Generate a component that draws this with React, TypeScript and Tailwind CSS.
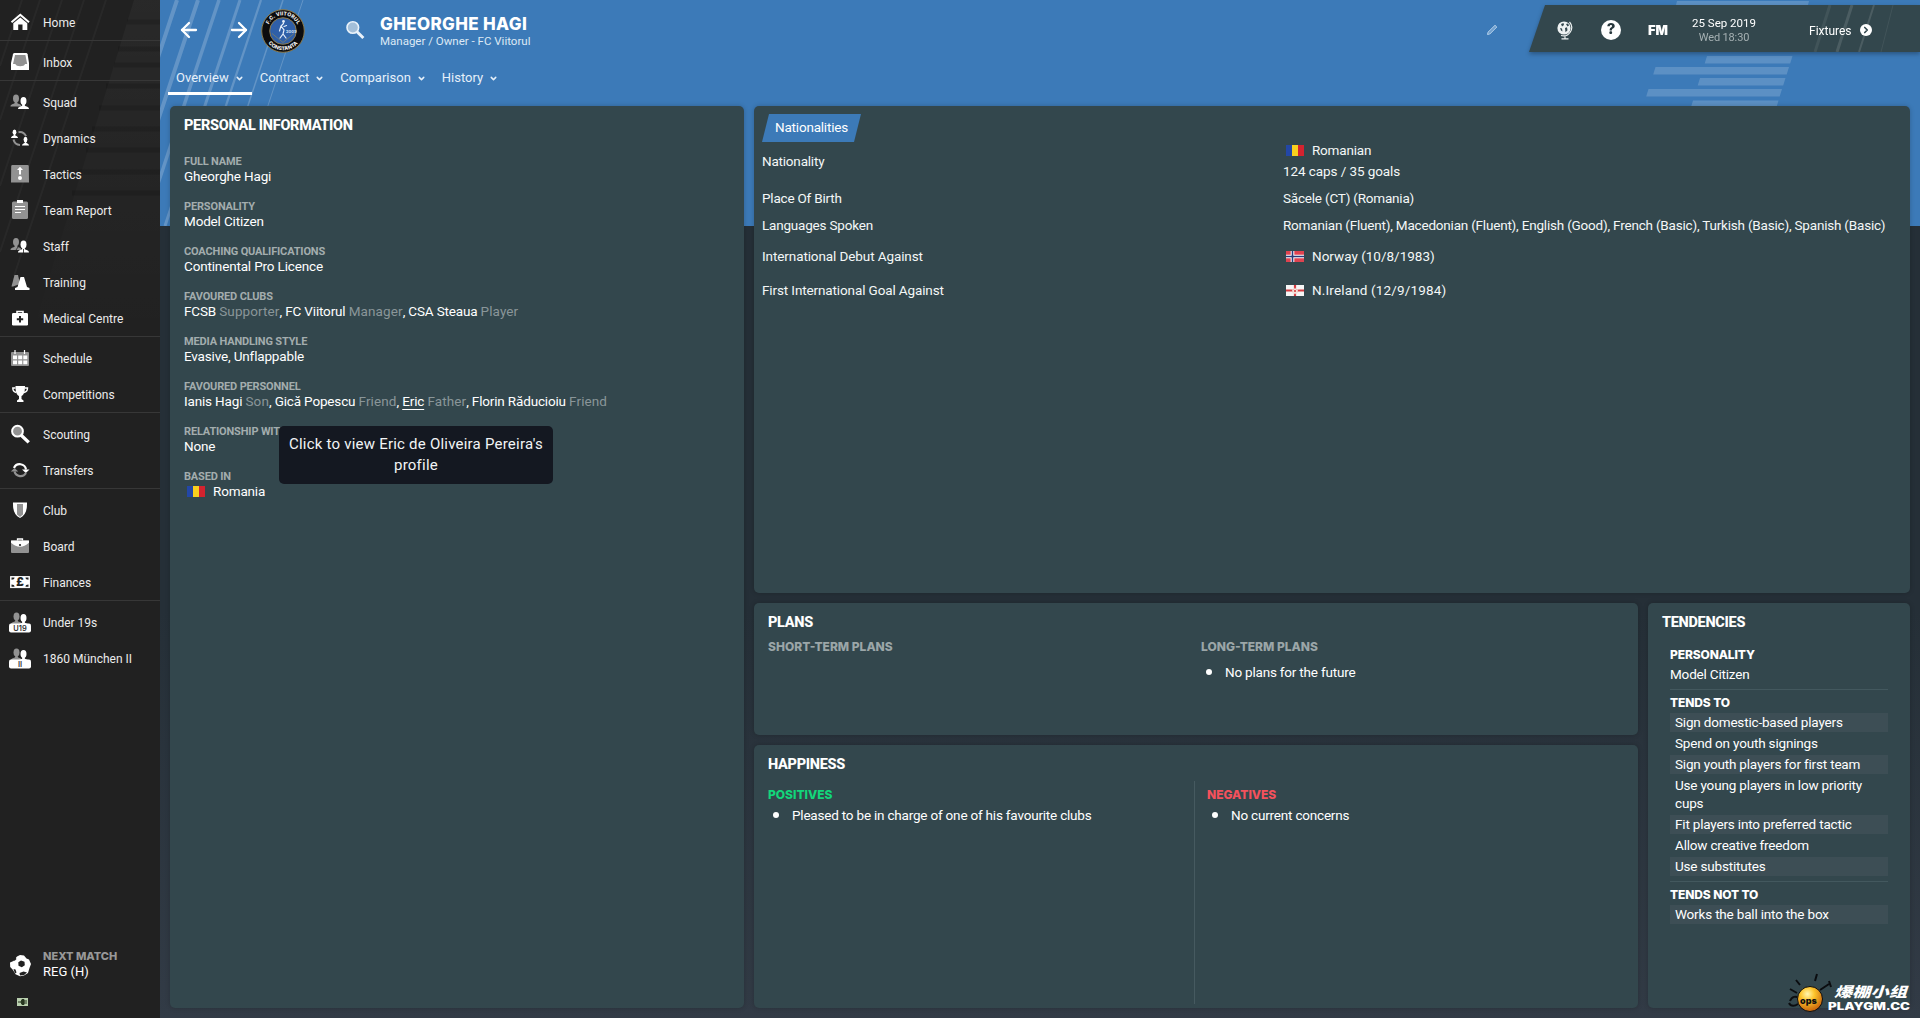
import type { ReactNode } from 'react'
import { ArrowLeft, ArrowRight, ChevronDown, ChevronRight } from 'lucide-react'

interface NavItem {
  label: string
  icon: ReactNode
}

const GREY = '#929292'

function Head({ x, y, fill }: { x: number; y: number; fill: string }) {
  return (
    <g fill={fill}>
      <ellipse cx={x} cy={y} rx="3" ry="3.9" />
      <path d={`M${x - 5.5} ${y + 8}c0-2.6 3-2.4 4.2-3.6v-2h2.6v2c1.2 1.2 4.2 1 4.2 3.6z`} />
    </g>
  )
}

function TeamIcon({ tag }: { tag: string }) {
  return (
    <>
      <Head x={6.5} y={4.5} fill={GREY} />
      <Head x={13.5} y={6} fill="#fff" />
      <rect x="-1" y="11.5" width="22" height="9" rx="2" fill="#fff" />
      <text x="10" y="19" textAnchor="middle" className="font-[Inter] text-[7.5px] font-semibold" fill="#333">{tag}</text>
    </>
  )
}

const navGroups: NavItem[][] = [
  [
    {
      label: 'Home',
      icon: (
        <>
          <path d="M1.5 10.2 10.3 2.7 19 10.2" fill="none" stroke="#fff" strokeWidth="2" />
          <path d="M3.3 11.2 10.3 5.5l7 5.7V18h-4.8v-5.500H8.200V18H3.300z" fill="#fff" />
        </>
      ),
    },
  ],
  [
    {
      label: 'Inbox',
      icon: (
        <>
          <path d="M4.5 1H16q1.300 0 1.600 1.300L19 11v7H1v-7l2-8.700Q3.300 1 4.500 1z" fill="#fff" />
          <path d="M5 3h10.400l1.800 9H15c-.5 3-9 3-9.600 0H3z" fill={GREY} />
        </>
      ),
    },
  ],
  [
    {
      label: 'Squad',
      icon: (
        <>
          <Head x={6} y={6.5} fill={GREY} />
          <Head x={13.5} y={9} fill="#fff" />
        </>
      ),
    },
    {
      label: 'Dynamics',
      icon: (
        <>
          <path d="M8.500 4.200a7 7 0 0 1 7.500 4M3.500 11.500a7 7 0 0 0 6.500 5.500" fill="none" stroke={GREY} strokeWidth="2" />
          <g fill="#fff">
            <ellipse cx="4.5" cy="4.3" rx="1.9" ry="2.7" />
            <path d="M1 10c0-2 2-2 2.800-2.800V6h1.400v1.200C6 8 8 8 8 10z" />
            <ellipse cx="15.5" cy="11.5" rx="1.9" ry="2.7" />
            <path d="M12 17.500c0-2 2-2 2.800-2.800v-1.200h1.400v1.200c.8.8 2.800.8 2.800 2.800z" />
          </g>
        </>
      ),
    },
    {
      label: 'Tactics',
      icon: (
        <>
          <path d="M2.500 1h15q1.300 0 1.300 1.200L19 18.500H1L1.200 2.200Q1.200 1 2.500 1z" fill={GREY} />
          <path d="M10 2.800 13 6h-2v4.500H9V6H7z" fill="#fff" />
          <circle cx="10" cy="14" r="2" fill="#fff" />
        </>
      ),
    },
    {
      label: 'Team Report',
      icon: (
        <>
          <rect x="2" y="1.5" width="16" height="17.5" rx="1.5" fill={GREY} />
          <rect x="7" y="0" width="6" height="3" fill="#fff" />
          <path d="M5 6.500h10M5 9.500h10M5 12.500h6" stroke="#fff" strokeWidth="1.2" />
        </>
      ),
    },
    {
      label: 'Staff',
      icon: (
        <>
          <Head x={6} y={6} fill={GREY} />
          <Head x={13.5} y={8.5} fill="#fff" />
          <path d="M13.500 13v4M8 11l-2 3" stroke="#222" strokeWidth=".8" />
        </>
      ),
    },
    {
      label: 'Training',
      icon: (
        <>
          <path d="M4.500 3h3.500l2 9-7 2.500H1.500z" fill={GREY} />
          <path d="M10.500 5h3.500l3 10 2.500 1v2H5v-2l2.500-1z" fill="#fff" />
        </>
      ),
    },
    {
      label: 'Medical Centre',
      icon: (
        <>
          <path d="M7 6V3.500h6V6" fill="none" stroke="#fff" strokeWidth="1.6" />
          <rect x="2" y="5" width="16" height="12.5" rx="1.2" fill="#fff" />
          <path d="M10 8v6.500M6.800 11.200h6.400" stroke="#222" strokeWidth="2" />
        </>
      ),
    },
  ],
  [
    {
      label: 'Schedule',
      icon: (
        <>
          <rect x="1" y="4" width="18" height="14" rx="1" fill={GREY} />
          <path d="M5 2v4M14.500 2v4" stroke="#fff" strokeWidth="1.2" />
          <path d="M3 7.500h4v3.800H3zM8.200 7.500h4v3.800h-4zM13.300 7.500h4v3.800h-4zM3 12.500h4v3.800H3zM8.200 12.500h4v3.800h-4zM13.300 12.500h4v3.800h-4z" fill="#fff" />
        </>
      ),
    },
    {
      label: 'Competitions',
      icon: (
        <>
          <path d="M5.500 2h9.500c0 6-1 8.500-3.500 10v3l2 1.500V18H7v-1.500L9 15v-3C6.500 10.500 5.500 8 5.500 2z" fill="#fff" />
          <path d="M5.500 4H2.800c0 2.500 1 4 3.500 4.500M15 4h2.500c0 2.500-1 4-3.500 4.500" fill="none" stroke="#fff" strokeWidth="1.4" />
        </>
      ),
    },
  ],
  [
    {
      label: 'Scouting',
      icon: (
        <>
          <circle cx="7.5" cy="7.2" r="5.4" fill={GREY} stroke="#fff" strokeWidth="2" />
          <path d="m12.500 12.500 5 4.700" stroke="#fff" strokeWidth="3.4" strokeLinecap="square" />
        </>
      ),
    },
    {
      label: 'Transfers',
      icon: (
        <>
          <path d="M4 8a6.300 6.300 0 0 1 12 1.500" fill="none" stroke="#fff" strokeWidth="2.2" />
          <path d="M12 9.500h7.500L15.800 13z" fill="#fff" />
          <path d="M16 13a6.300 6.300 0 0 1-11.500-1.500" fill="none" stroke={GREY} strokeWidth="2.2" />
          <path d="M.8 11.500h7.400L4.500 8z" fill={GREY} />
        </>
      ),
    },
  ],
  [
    {
      label: 'Club',
      icon: (
        <>
          <path d="M3 2.500h14c.2 8-1.500 12.500-7 15.500C4.500 15 2.800 10.500 3 2.500z" fill="#fff" />
          <path d="M7 4h6v10.500L10 17l-3-2.500z" fill={GREY} />
        </>
      ),
    },
    {
      label: 'Board',
      icon: (
        <>
          <rect x="1" y="4.5" width="18" height="12.5" rx="1" fill={GREY} />
          <path d="M7.500 4.500V3h5v1.500" fill="none" stroke="#fff" strokeWidth="1.3" />
          <path d="M1 4.500h18v2.200c-3 2.600-6 4-9 4s-6-1.400-9-4z" fill="#fff" />
          <circle cx="10" cy="9" r="1.1" fill="#222" />
        </>
      ),
    },
    {
      label: 'Finances',
      icon: (
        <>
          <rect x=".6" y="4.6" width="18.8" height="11" fill="#fff" stroke="#fff" />
          <path d="M1.500 5.500h3q0 2.200-3 2.200zM18.500 5.500h-3q0 2.200 3 2.200zM1.500 14.700h3q0-2.200-3-2.200zM18.500 14.700h-3q0-2.200 3-2.200z" fill="#222" />
          <text x="10" y="14.3" textAnchor="middle" className="font-[Inter] text-[11.5px] font-black" fill="#222">£</text>
        </>
      ),
    },
  ],
  [
    { label: 'Under 19s', icon: <TeamIcon tag="U19" /> },
    { label: '1860 München II', icon: <TeamIcon tag="II" /> },
  ],
]

function Sidebar() {
  return (
    <aside className="relative flex h-full w-40 flex-col bg-[#212121] pt-px">
      <svg className="absolute inset-0" width="160" height="340">
        <defs>
          <linearGradient id="fade" x1="0" y1="0" x2="0" y2="1">
            <stop offset="0" stopColor="#fff" stopOpacity=".035" />
            <stop offset="1" stopColor="#fff" stopOpacity="0" />
          </linearGradient>
        </defs>
        <path d="M134 0h26v340H30z" fill="url(#fade)" />
        <g stroke="#000" strokeOpacity=".13" strokeWidth="5">
          <path d="M127 22h33M118 49h42M114 65h46M106 86h54M99 108h61M92 129h68M86 150h74M78 172h82M72 193h88" />
        </g>
        <g stroke="#fff" strokeOpacity=".035" strokeWidth="2">
          <path d="M40 0 0 120M62 0 0 186M84 0 0 252M106 0 14 276M22 0 0 66" />
        </g>
      </svg>
      <nav className="relative">
        {navGroups.map((group, i) => (
          <ul key={i} className={`pt-[3px] ${i < navGroups.length - 1 ? 'border-b border-[#373737]' : ''}`}>
            {group.map((item) => (
              <li key={item.label} className="flex h-9 items-center gap-[13px] pl-2.5">
                <svg width="20" height="20" viewBox="0 0 20 20" className="shrink-0 overflow-visible">{item.icon}</svg>
                <span className="whitespace-nowrap pt-0.5 text-[12px] text-[#ececec]">{item.label}</span>
              </li>
            ))}
          </ul>
        ))}
      </nav>

      <div className="relative mt-auto flex items-center gap-3 pl-2.5">
        <svg width="21" height="22" viewBox="0 0 21 22">
          <path d="M7 1.500 10 0l4 .6 2.500 3 2.500 1 2 4.500-1.500 4L18 18l-4 2.500-4 .8-4.500-2L3 15 .2 12 0 7.500l3.500-1.600z" fill="#fff" />
          <path d="m11 5.500 3.500 1.300.3 3.400-3 2-3.300-1.500-.2-3.400zM3 3.500 5 2l1.500 2-2 2zM3.500 14l2 .5 1 3-1.500 1zM9.500 18l4-1.500 3.500 1-3 2.500-4 .5z" fill="#212121" />
        </svg>
        <div className="pb-[3px]">
          <p className="font-[Inter] text-[11px] font-extrabold leading-[15px] text-[#989898]">NEXT MATCH</p>
          <p className="text-[13px] leading-4 text-white">REG (H)</p>
        </div>
      </div>
      <svg className="relative mb-3 ml-[17px] mt-[15px]" width="11" height="8" viewBox="0 0 11 8">
        <rect width="11" height="8" fill="#b9cfae" />
        <path d="M1 4h3M5 1.500h2v5H5q-2-2.500 0-5zM7 3h3M7 5h3" stroke="#26351f" fill="#26351f" />
      </svg>
    </aside>
  )
}

function Backdrop() {
  return (
    <svg className="absolute inset-0" width="1760" height="226">
      <rect width="1760" height="226" fill="#3c7ab8" />
      <g stroke="#fff" strokeOpacity=".2">
        <path d="M17 0-20 112M38 0-37 226" strokeWidth="4" />
        <path d="M59 0-16 226" strokeWidth="3.5" />
        <path d="M80 0 5 226" strokeWidth="3" />
        <path d="M101 0 26 226" strokeWidth="2.3" />
        <path d="M123 0 48 226" strokeWidth="1.5" />
        <path d="M143 0 68 226" strokeWidth="1" />
      </g>
      <path
        d="M1517 1h132l-1 4h-132zM1547 56h85.500l-2.300 7.500h-85.500zM1495.500 67h133.500l-2.300 7.500h-133.500zM1540 78h85.500l-2.300 7.500h-85.500zM1488.500 89h133.500l-2.300 7.500h-133.500zM1533 100.500h85.500l-1.800 6h-85.500z"
        fill="#fff"
        fillOpacity=".17"
      />
    </svg>
  )
}

function Crest() {
  return (
    <svg width="44" height="44" viewBox="0 0 44 44">
      <defs>
        <path id="crest-top" d="M6.300 22a15.700 15.700 0 0 1 31.400 0" />
        <path id="crest-bottom" d="M2.800 22a19.200 19.200 0 0 0 38.400 0" />
      </defs>
      <circle cx="22" cy="22" r="21.3" fill="#0c0c0e" stroke="#8b7a4c" strokeWidth="1" />
      <circle cx="22" cy="22" r="13.3" fill="#2f5fa8" stroke="#8b7a4c" strokeWidth="1" />
      <path d="M11 24.500 22 33.500l11-9" fill="none" stroke="#6c7a78" strokeWidth="1" />
      <g fill="none" stroke="#e6eefa" strokeWidth="1.2" strokeLinecap="round">
        <path d="M22.500 14.500 20 17l3 4-1 4-3 4M22 25l3 4M20 17l-1.500 5M23 17.500l2.500-1" />
        <circle cx="22.5" cy="12.5" r=".8" fill="#fff" />
      </g>
      <text x="25" y="24" className="font-[Inter] text-[4px] font-bold" fill="#d9e4f2">2009</text>
      <text className="font-[Inter] text-[5.2px] font-extrabold" fill="#f1f1f1">
        <textPath href="#crest-top" startOffset="50%" textAnchor="middle">F.C. VIITORUL</textPath>
      </text>
      <text className="font-[Inter] text-[5.2px] font-extrabold" fill="#f1f1f1">
        <textPath href="#crest-bottom" startOffset="50%" textAnchor="middle">CONSTANTA</textPath>
      </text>
    </svg>
  )
}

const tabs = ['Overview', 'Contract', 'Comparison', 'History']

function StatusBar() {
  return (
    <div className="relative mt-[5px] flex h-[47px] w-[391px] shrink-0 items-center drop-shadow-[0_2px_2px_rgba(0,0,0,0.3)]">
      <svg className="absolute inset-0" width="391" height="47">
        <path d="M16 0h375v47H0z" fill="#33474d" />
        <g stroke="#fff" strokeOpacity=".12">
          <path d="M301 0 286 47" strokeWidth="3" strokeOpacity=".07" />
          <path d="M323 0 308 47" strokeWidth="3" />
          <path d="M345 0 330 47" strokeWidth="2" />
          <path d="M364 0 352 47" strokeWidth="1" strokeOpacity=".07" />
        </g>
      </svg>
      <div className="relative flex w-full items-center pl-[27px] pt-0.5">
        <svg width="18" height="20" viewBox="0 0 18 20">
          <circle cx="8" cy="8" r="6.6" fill="#eef2f2" />
          <path d="M13.500 2a8.300 8.300 0 0 1-8.500 13.500M9 16v2.500M5.500 18.900h7" fill="none" stroke="#eef2f2" strokeWidth="1.2" />
          <path d="m5 4 2.500-1 .5 2-2 1.500zM10 4l2-.5 1 2-1.500 1zM4 8l2 .5.500 3-1.500-1zM9 8l2-.8.5 3-2 2z" fill="#33474d" />
        </svg>
        <span className="ml-[27px] flex size-5 items-center justify-center rounded-full bg-white font-[Inter] text-[15px] font-extrabold text-[#26363b]">?</span>
        <span className="ml-[27px] w-[22px] pt-0.5 font-[Inter] text-[13px] font-black leading-none tracking-[-0.2px] text-white">FM</span>
        <div className="ml-[21px] w-[66px] text-center">
          <p className="text-[11.5px] leading-[15px] text-white">25 Sep 2019</p>
          <p className="text-[11px] leading-[13px] tracking-[-0.15px] text-[#a5b0b2]">Wed 18:30</p>
        </div>
        <span className="ml-[52px] pt-0.5 text-[12px] text-white">Fixtures</span>
        <span className="ml-2 flex size-3 items-center justify-center rounded-full bg-white text-[#33474d]">
          <ChevronRight size={10} strokeWidth={4} />
        </span>
      </div>
    </div>
  )
}

function Header() {
  return (
    <header className="relative flex h-[106px] justify-between">
      <div>
        <div className="flex h-[60px] items-center pl-[17px] text-white">
          <ArrowLeft size={24} strokeWidth={2.3} />
          <ArrowRight size={24} strokeWidth={2.3} className="ml-[26px]" />
          <div className="ml-2.5 pt-px"><Crest /></div>
          <svg width="20" height="20" viewBox="0 0 20 20" className="ml-10">
            <circle cx="7.8" cy="7.5" r="5.8" fill="#a3bfd9" stroke="#e9f2fa" strokeWidth="1.6" />
            <path d="m12.800 12.500 4.500 4.500" stroke="#e9f2fa" strokeWidth="3" strokeLinecap="square" />
          </svg>
          <div className="ml-[15px] pt-0.5">
            <h1 className="font-[Inter] text-[17px] font-extrabold leading-5 tracking-[0.35px]">GHEORGHE HAGI</h1>
            <p className="-mt-px text-[11.5px] leading-4 text-[#dde9f5]">Manager / Owner - FC Viitorul</p>
          </div>
        </div>
        <nav className="flex h-[35px] pl-2">
          {tabs.map((tab, i) => (
            <div key={tab} className={`flex items-center gap-[7px] border-b-[3px] pl-2 pr-[9px] pt-[3px] text-[13px] text-[#e6f0fa] ${i === 0 ? 'border-white' : 'border-transparent'}`}>
              {tab}
              <ChevronDown size={9} strokeWidth={4} className="-mx-px mt-0.5" />
            </div>
          ))}
        </nav>
      </div>
      <div className="flex">
        <svg width="12" height="12" viewBox="0 0 12 12" className="mr-[31px] mt-6">
          <path d="M1.500 10.500 2 8.200 9 1.300 10.800 3 3.800 10z" fill="#6f9fce" stroke="#b4d0ea" strokeWidth="1" />
        </svg>
        <StatusBar />
      </div>
    </header>
  )
}

function Flag({ country }: { country: 'ro' | 'no' | 'ni' }) {
  return (
    <svg width="18" height="11" viewBox="0 0 18 11" className="shrink-0">
      {country === 'ro' && (
        <>
          <path d="M0 0h6v11H0z" fill="#2347a6" />
          <path d="M6 0h6v11H6z" fill="#f9d01e" />
          <path d="M12 0h6v11h-6z" fill="#d3232f" />
        </>
      )}
      {country === 'no' && (
        <>
          <path d="M0 0h18v11H0z" fill="#df4350" />
          <path d="M6.500 0v11M0 5.500h18" stroke="#fff" strokeWidth="3.6" />
          <path d="M6.500 0v11M0 5.500h18" stroke="#283a78" strokeWidth="1.6" />
        </>
      )}
      {country === 'ni' && (
        <>
          <path d="M0 0h18v11H0z" fill="#f6f6f6" />
          <path d="M9 0v11M0 5.500h18" stroke="#d63b40" strokeWidth="2.2" />
          <path d="m9 2.500 1.200 2 2.200-.1-1 1.900 1 1.900-2.200-.1L9 9.500 7.800 8.100l-2.200.1 1-1.900-1-1.900 2.200.1z" fill="#f4e3da" />
          <circle cx="9" cy="6" r="1.1" fill="#d63b40" />
        </>
      )}
    </svg>
  )
}

function Panel({ title, className = '', children }: { title?: string; className?: string; children?: ReactNode }) {
  return (
    <section className={`rounded-[5px] bg-[#33474d] shadow-[0_0_5px_rgba(0,0,0,0.2)] ${className}`}>
      {title && (
        <h2 className="flex h-[38px] items-center px-3.5 pt-0.5 text-[14.5px] font-extrabold tracking-[-0.3px] text-white">{title}</h2>
      )}
      {children}
    </section>
  )
}

const Muted = ({ children }: { children: string }) => <span className="tracking-[0.1px] text-[#8a9699]">{children}</span>

const personalInfo: { label: string; value: ReactNode }[] = [
  { label: 'FULL NAME', value: 'Gheorghe Hagi' },
  { label: 'PERSONALITY', value: 'Model Citizen' },
  { label: 'COACHING QUALIFICATIONS', value: 'Continental Pro Licence' },
  {
    label: 'FAVOURED CLUBS',
    value: <>FCSB <Muted>Supporter</Muted>, FC Viitorul <Muted>Manager</Muted>, CSA Steaua <Muted>Player</Muted></>,
  },
  { label: 'MEDIA HANDLING STYLE', value: 'Evasive, Unflappable' },
  {
    label: 'FAVOURED PERSONNEL',
    value: (
      <>
        Ianis Hagi <Muted>Son</Muted>, Gică Popescu <Muted>Friend</Muted>,{' '}
        <span className="underline underline-offset-[3px]">Eric</span> <Muted>Father</Muted>, Florin Răducioiu <Muted>Friend</Muted>
      </>
    ),
  },
  { label: 'RELATIONSHIP WIT', value: 'None' },
  {
    label: 'BASED IN',
    value: <span className="flex items-center gap-2 pl-[3px]"><Flag country="ro" />Romania</span>,
  },
]

function PersonalInformation() {
  return (
    <Panel title="PERSONAL INFORMATION" className="relative row-span-3">
      <dl className="px-3.5 pt-2.5">
        {personalInfo.map(({ label, value }) => (
          <div key={label} className="h-[45px]">
            <dt className="text-[11px] font-bold leading-[15px] tracking-[-0.16px] text-[#a3adae]">{label}</dt>
            <dd className="text-[13.5px] leading-[15px] tracking-[-0.16px] text-white">{value}</dd>
          </div>
        ))}
      </dl>
      <div className="absolute left-[109px] top-80 flex h-[58px] w-[274px] items-center justify-center rounded-[5px] bg-[#141821] text-center text-[15px] leading-[21px] tracking-[0.22px] text-[#f2f4f6]">
        Click to view Eric de Oliveira Pereira's<br />profile
      </div>
    </Panel>
  )
}

function FactRow({ label, className, children }: { label: string; className: string; children: ReactNode }) {
  return (
    <div className={`grid grid-cols-[521px_1fr] items-center ${className}`}>
      <span>{label}</span>
      <div className="flex items-center">{children}</div>
    </div>
  )
}

function Nationalities() {
  return (
    <Panel className="col-span-2 px-2 pt-2">
      <div className="relative flex h-7 w-[99px] items-center justify-center pb-0.5 text-[13.5px] tracking-[-0.2px] text-white">
        <svg className="absolute inset-0" width="99" height="28"><path d="M7 0h92l-7 28H0z" fill="#3c7ab8" /></svg>
        <span className="relative">Nationalities</span>
      </div>
      <div className="-mt-0.5 text-[13.5px] tracking-[-0.2px] text-[#f4f7f7]">
        <FactRow label="Nationality" className="mb-[3px] h-[42px]">
          <div className="leading-[21px]">
            <p className="flex items-center gap-2 pl-[3px]"><Flag country="ro" />Romanian</p>
            <p className="tracking-[-0.08px]">124 caps / 35 goals</p>
          </div>
        </FactRow>
        <FactRow label="Place Of Birth" className="h-[27px]">Săcele (CT) (Romania)</FactRow>
        <FactRow label="Languages Spoken" className="h-[27px]">
          Romanian (Fluent), Macedonian (Fluent), English (Good), French (Basic), Turkish (Basic), Spanish (Basic)
        </FactRow>
        <FactRow label="International Debut Against" className="h-[34px] tracking-[-0.1px]">
          <span className="flex items-center gap-2 pl-[3px] tracking-normal"><Flag country="no" />Norway (10/8/1983)</span>
        </FactRow>
        <FactRow label="First International Goal Against" className="h-[34px] tracking-[-0.12px]">
          <span className="flex items-center gap-2 pl-[3px] tracking-[0.15px]"><Flag country="ni" />N.Ireland (12/9/1984)</span>
        </FactRow>
      </div>
    </Panel>
  )
}

function Bullet({ children }: { children: string }) {
  return (
    <p className="flex h-5 items-center gap-[13px] pl-[5px] text-[13.5px] tracking-[-0.2px] text-white">
      <span className="size-1.5 rounded-full bg-white" />
      {children}
    </p>
  )
}

const capsTitle = 'font-[Inter] text-[12px] font-extrabold leading-3'

function Plans() {
  return (
    <Panel title="PLANS">
      <div className="grid grid-cols-2 gap-2.5 px-3.5">
        <h3 className={`${capsTitle} text-[#9ba6a8]`}>SHORT-TERM PLANS</h3>
        <div>
          <h3 className={`${capsTitle} mb-[9px] text-[#9ba6a8]`}>LONG-TERM PLANS</h3>
          <Bullet>No plans for the future</Bullet>
        </div>
      </div>
    </Panel>
  )
}

function Happiness() {
  return (
    <Panel title="HAPPINESS" className="flex flex-col">
      <div className="-mt-0.5 mb-1 grid grow grid-cols-[441px_1fr]">
        <div className="border-r border-[#465a60] pl-3.5 pt-2">
          <h3 className={`${capsTitle} mb-1 text-[#12d67a]`}>POSITIVES</h3>
          <Bullet>Pleased to be in charge of one of his favourite clubs</Bullet>
        </div>
        <div className="pl-3 pt-2">
          <h3 className={`${capsTitle} mb-1 text-[#f4515c]`}>NEGATIVES</h3>
          <Bullet>No current concerns</Bullet>
        </div>
      </div>
    </Panel>
  )
}

const tendsTo = [
  'Sign domestic-based players',
  'Spend on youth signings',
  'Sign youth players for first team',
  'Use young players in low priority cups',
  'Fit players into preferred tactic',
  'Allow creative freedom',
  'Use substitutes',
]

function TendencyList({ items }: { items: string[] }) {
  return (
    <ul className="mt-0.5 space-y-0.5">
      {items.map((item, i) => (
        <li key={item} className={`pb-px pl-[5px] pr-4 leading-[18px] ${i % 2 === 0 ? 'bg-[#3d4e55]' : ''}`}>{item}</li>
      ))}
    </ul>
  )
}

function Tendencies() {
  const heading = 'font-[Inter] text-[12px] font-extrabold leading-4 tracking-[-0.12px]'
  return (
    <Panel title="TENDENCIES" className="row-span-2">
      <div className="px-[22px] pt-1.5 text-[13.5px] tracking-[-0.18px] text-white">
        <h3 className={heading}>PERSONALITY</h3>
        <p className="mt-0.5 leading-[19px]">Model Citizen</p>
        <hr className="mb-[5px] mt-[5px] border-[#43585e]" />
        <h3 className={heading}>TENDS TO</h3>
        <TendencyList items={tendsTo} />
        <hr className="mb-[5px] mt-[5px] border-[#43585e]" />
        <h3 className={heading}>TENDS NOT TO</h3>
        <TendencyList items={['Works the ball into the box']} />
      </div>
    </Panel>
  )
}

function Watermark() {
  return (
    <div className="absolute bottom-0 right-0 h-[46px] w-[134px]">
      <svg width="134" height="46" viewBox="0 0 134 46">
        <defs>
          <radialGradient id="bomb" cx=".4" cy=".3" r=".7">
            <stop offset="0" stopColor="#fff6b0" />
            <stop offset=".4" stopColor="#fdc52c" />
            <stop offset="1" stopColor="#c9640c" />
          </radialGradient>
        </defs>
        <g stroke="#0b0d10" strokeWidth="2" fill="none">
          <path d="m10 8 4 5M31 2l-2 7M4 17l7 4M4 29c2-5 6-5 9-3M3 31c2 4 6 3 9 1M34 18l9-6M43 9l2 6" />
        </g>
        <circle cx="24" cy="27" r="12.5" fill="url(#bomb)" stroke="#0b0d10" strokeWidth="1" />
        <text x="14" y="32" className="font-[Inter] text-[9px] font-black" fill="#111">ops</text>
        <g fill="#fff">
          <text x="48" y="25" textLength="73" lengthAdjust="spacingAndGlyphs" className="font-['Noto_Sans_CJK_SC',sans-serif] text-[14px] font-black italic">爆棚小组</text>
          <text x="42" y="37.5" textLength="82" lengthAdjust="spacingAndGlyphs" className="font-[Inter] text-[10px] font-black">PLAYGM.CC</text>
        </g>
      </svg>
    </div>
  )
}

export default function App() {
  return (
    <div className="flex h-[1018px] w-[1920px] overflow-hidden font-[Roboto,sans-serif]">
      <Sidebar />
      <main className="relative flex grow flex-col bg-linear-to-b from-[#252f37] from-60% to-[#323b46]">
        <Backdrop />
        <Header />
        <div className="relative grid grow grid-cols-[574px_884px_262px] grid-rows-[487px_132px_263px] gap-2.5 px-2.5">
          <PersonalInformation />
          <Nationalities />
          <Plans />
          <Tendencies />
          <Happiness />
        </div>
        <Watermark />
      </main>
    </div>
  )
}
